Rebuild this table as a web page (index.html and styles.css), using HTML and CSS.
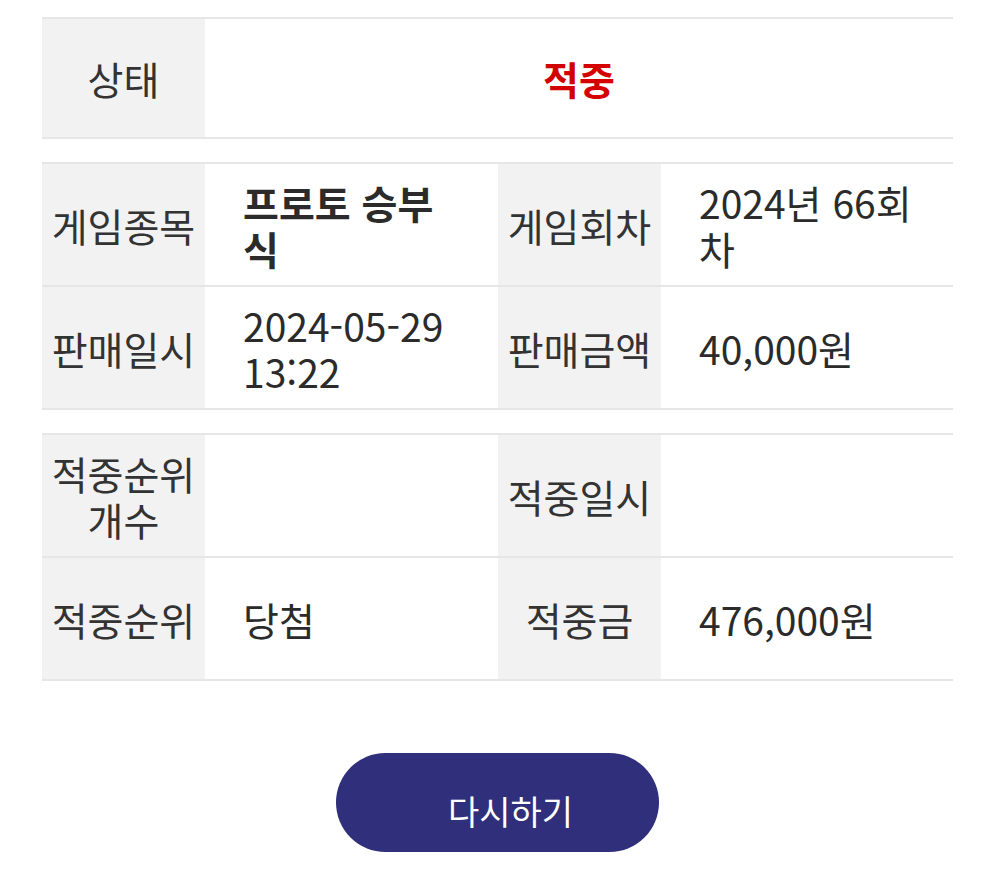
FILE: index.html
```html
<!DOCTYPE html>
<html lang="ko">
<head>
<meta charset="utf-8">
<title>결과</title>
<link rel="stylesheet" href="styles.css">
</head>
<body>
<div class="page">
  <div class="tbl tbl-one">
    <div class="cell label">상태</div>
    <div class="cell value status">적중</div>
  </div>

  <div class="tbl tbl-four">
    <div class="cell label">게임종목</div>
    <div class="cell value strong">프로토 승부식</div>
    <div class="cell label">게임회차</div>
    <div class="cell value">2024년 66회차</div>

    <div class="cell label">판매일시</div>
    <div class="cell value">2024-05-29 13:22</div>
    <div class="cell label">판매금액</div>
    <div class="cell value">40,000원</div>
  </div>

  <div class="tbl tbl-four">
    <div class="cell label">적중순위 개수</div>
    <div class="cell value"></div>
    <div class="cell label">적중일시</div>
    <div class="cell value"></div>

    <div class="cell label">적중순위</div>
    <div class="cell value">당첨</div>
    <div class="cell label">적중금</div>
    <div class="cell value">476,000원</div>
  </div>

  <div class="actions">
    <button class="btn" type="button">다시하기</button>
  </div>
</div>
</body>
</html>
```

FILE: styles.css
```css
html, body {
  margin: 0;
  padding: 0;
  background: #ffffff;
}

body {
  font-family: "Noto Sans CJK KR", "Noto Sans", sans-serif;
  color: #333333;
}

.page {
  width: 911px;
  padding: 17px 0 0 42px;
}

.tbl {
  display: grid;
  border-top: 2px solid #e6e6e6;
  margin-bottom: 23px;
}

.tbl-one {
  grid-template-columns: 163px 1fr;
}

.tbl-four {
  grid-template-columns: 163px 293px 163px 292px;
}

.cell {
  display: flex;
  align-items: center;
  min-height: 123px;
  border-bottom: 2px solid #e6e6e6;
  font-size: 39px;
  line-height: 46px;
  box-sizing: border-box;
}

.tbl-one .cell {
  min-height: 120px;
}

.label {
  background: #f2f2f2;
  justify-content: center;
  text-align: center;
  padding: 0 2px;
  color: #333333;
}

.value {
  background: #ffffff;
  padding: 0 38px;
  color: #2b2b2b;
}

.strong {
  font-weight: 700;
}

.status {
  justify-content: center;
  color: #d40000;
  font-weight: 700;
}

.actions {
  display: flex;
  justify-content: center;
  padding-top: 49px;
}

.btn {
  width: 323px;
  height: 99px;
  border: none;
  border-radius: 50px;
  background: #2f2f7b;
  color: #ffffff;
  font-family: "Noto Sans CJK KR", "Noto Sans", sans-serif;
  font-size: 34px;
  padding: 16px 0 0 26px;
  cursor: pointer;
}
```
